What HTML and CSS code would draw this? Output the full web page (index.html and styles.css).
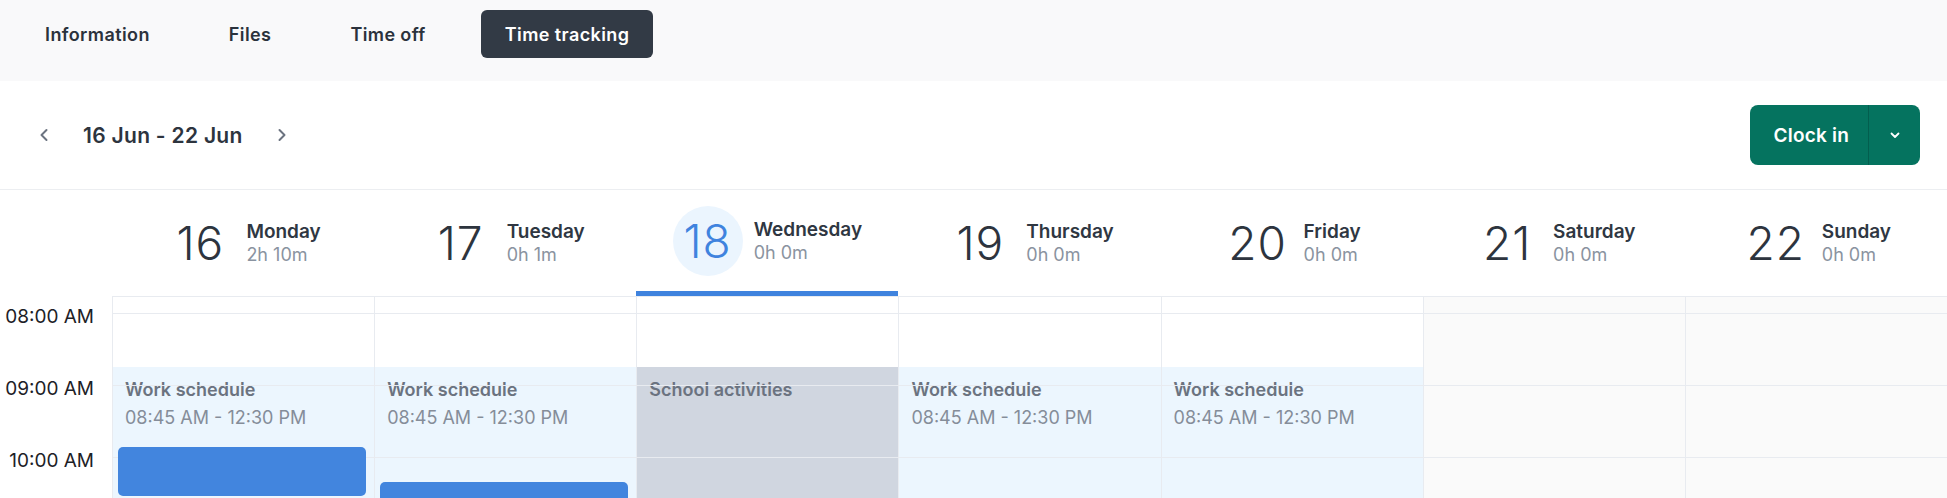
FILE: index.html
```html
<!DOCTYPE html>
<html>
<head>
    <title>Time tracking</title>
    <meta charset="UTF-8">
    <link rel="stylesheet" href="styles.css">
</head>
<body>

<div class="page">
    <div class="tabs">
        <a class="tab">Information</a>
        <a class="tab">Files</a>
        <a class="tab">Time off</a>
        <a class="tab active">Time tracking</a>
    </div>

    <div class="toolbar">
        <div class="week-nav">
            <button class="nav-btn">
                <svg width="24" height="24" viewBox="0 0 24 24"><path d="M14.5 7L9.5 12L14.5 17" /></svg>
            </button>
            <span class="week-label">16 Jun - 22 Jun</span>
            <button class="nav-btn">
                <svg width="24" height="24" viewBox="0 0 24 24"><path d="M9.5 7L14.5 12L9.5 17" /></svg>
            </button>
        </div>
        <div class="clock">
            <button class="clock-main">Clock in</button>
            <button class="clock-toggle">
                <svg width="16" height="16" viewBox="0 0 16 16"><path d="M4.5 6.5L8 10L11.5 6.5" /></svg>
            </button>
        </div>
    </div>

    <div class="cal-head">
        <div class="gutter"></div>
        <div class="day-head"><span class="day-num">16</span><div><div class="day-name">Monday</div><div class="day-total">2h 10m</div></div></div>
        <div class="day-head"><span class="day-num">17</span><div><div class="day-name">Tuesday</div><div class="day-total">0h 1m</div></div></div>
        <div class="day-head today"><span class="day-num">18</span><div><div class="day-name">Wednesday</div><div class="day-total">0h 0m</div></div></div>
        <div class="day-head"><span class="day-num">19</span><div><div class="day-name">Thursday</div><div class="day-total">0h 0m</div></div></div>
        <div class="day-head"><span class="day-num">20</span><div><div class="day-name">Friday</div><div class="day-total">0h 0m</div></div></div>
        <div class="day-head"><span class="day-num">21</span><div><div class="day-name">Saturday</div><div class="day-total">0h 0m</div></div></div>
        <div class="day-head"><span class="day-num">22</span><div><div class="day-name">Sunday</div><div class="day-total">0h 0m</div></div></div>
    </div>

    <div class="cal-body">
        <div class="gutter times">
            <div class="time">08:00 AM</div>
            <div class="time">09:00 AM</div>
            <div class="time">10:00 AM</div>
        </div>

        <div class="day-col">
            <div class="schedule">
                <div class="schedule-title">Work schedule</div>
                <div class="schedule-time">08:45 AM - 12:30 PM</div>
            </div>
            <div class="slots"><div class="slot-top"></div><div class="slot"></div><div class="slot"></div><div class="slot"></div></div>
            <div class="entry entry-mon"></div>
        </div>

        <div class="day-col">
            <div class="schedule">
                <div class="schedule-title">Work schedule</div>
                <div class="schedule-time">08:45 AM - 12:30 PM</div>
            </div>
            <div class="slots"><div class="slot-top"></div><div class="slot"></div><div class="slot"></div><div class="slot"></div></div>
            <div class="entry entry-tue"></div>
        </div>

        <div class="day-col">
            <div class="schedule absence">
                <div class="schedule-title">School activities</div>
            </div>
            <div class="slots"><div class="slot-top"></div><div class="slot"></div><div class="slot"></div><div class="slot"></div></div>
        </div>

        <div class="day-col">
            <div class="schedule">
                <div class="schedule-title">Work schedule</div>
                <div class="schedule-time">08:45 AM - 12:30 PM</div>
            </div>
            <div class="slots"><div class="slot-top"></div><div class="slot"></div><div class="slot"></div><div class="slot"></div></div>
        </div>

        <div class="day-col">
            <div class="schedule">
                <div class="schedule-title">Work schedule</div>
                <div class="schedule-time">08:45 AM - 12:30 PM</div>
            </div>
            <div class="slots"><div class="slot-top"></div><div class="slot"></div><div class="slot"></div><div class="slot"></div></div>
        </div>

        <div class="day-col weekend">
            <div class="slots"><div class="slot-top"></div><div class="slot"></div><div class="slot"></div><div class="slot"></div></div>
        </div>

        <div class="day-col weekend">
            <div class="slots"><div class="slot-top"></div><div class="slot"></div><div class="slot"></div><div class="slot"></div></div>
        </div>
    </div>
</div>

</body>
</html>
```

FILE: styles.css
```css
html,
body{
    height: 100%;
    margin: 0;
    overflow: hidden;
}

body{
    font-family: "Inter", "Liberation Sans", Arial, sans-serif;
    color: #2d343e;
    background-color: #ffffff;
}

.page{
    display: flex;
    flex-direction: column;
    height: 100%;
}

/* tabs */

.tabs{
    display: flex;
    align-items: center;
    gap: 31px;
    height: 48px;
    padding: 10px 21px 23px;
    background-color: #f9f9fa;
}

.tab{
    display: flex;
    align-items: center;
    height: 48px;
    padding: 0 24px;
    border-radius: 6px;
    font-size: 18px;
    font-weight: 600;
    letter-spacing: 0.4px;
    color: #2b323c;
    cursor: pointer;
}

.tab.active{
    background-color: #323a45;
    color: #ffffff;
}

/* week toolbar */

.toolbar{
    display: flex;
    align-items: center;
    justify-content: space-between;
    height: 108px;
    padding: 0 27px 0 32px;
    border-bottom: 1px solid #eceef1;
}

.week-nav{
    display: flex;
    align-items: center;
    gap: 27px;
}

.nav-btn{
    display: flex;
    width: 24px;
    height: 24px;
    padding: 0;
    border: none;
    background: none;
    cursor: pointer;
}

.nav-btn path{
    fill: none;
    stroke: #6b7380;
    stroke-width: 2;
    stroke-linecap: round;
    stroke-linejoin: round;
}

.week-label{
    font-size: 21px;
    font-weight: 600;
    letter-spacing: 0.3px;
    color: #2d343e;
}

.clock{
    display: flex;
    height: 60px;
    border-radius: 8px;
    background-color: #05735f;
    overflow: hidden;
}

.clock button{
    border: none;
    background: none;
    color: #ffffff;
    font-family: inherit;
    cursor: pointer;
}

.clock-main{
    padding: 0 19px 0 24px;
    font-size: 19px;
    font-weight: 600;
    letter-spacing: 0.2px;
}

.clock-toggle{
    display: flex;
    align-items: center;
    justify-content: center;
    width: 52px;
    border-left: 1px solid #035e4e !important;
}

.clock-toggle path{
    fill: none;
    stroke: #ffffff;
    stroke-width: 1.8;
    stroke-linecap: round;
    stroke-linejoin: round;
}

/* calendar */

.cal-head,
.cal-body{
    display: grid;
    grid-template-columns: 112px repeat(7, 1fr);
}

.day-head{
    display: flex;
    align-items: center;
    justify-content: center;
    gap: 11px;
    height: 106px;
    box-sizing: border-box;
}

.day-head.today{
    border-bottom: 5px solid #3f83de;
}

.day-num{
    width: 70px;
    height: 70px;
    line-height: 70px;
    text-align: center;
    font-size: 46px;
    font-weight: 300;
    letter-spacing: 1px;
    color: #2d343e;
}

.today .day-num{
    border-radius: 50%;
    background-color: #ebf5fe;
    color: #3f83de;
}

.day-name{
    font-size: 19px;
    font-weight: 600;
    line-height: 23px;
    color: #2f3742;
}

.day-total{
    font-size: 18px;
    line-height: 23px;
    color: #8a93a0;
}

.cal-body{
    flex: 1;
    overflow: hidden;
}

.times{
    padding-top: 10px;
}

.time{
    height: 72px;
    padding-right: 18px;
    line-height: 22px;
    text-align: right;
    font-size: 19px;
    color: #1d2127;
}

.day-col{
    position: relative;
    border-left: 1px solid #e8ebf0;
    border-top: 1px solid #e8ebf0;
    background-color: #ffffff;
}

.day-col.weekend{
    background-color: #fafafa;
}

.slots{
    position: relative;
    z-index: 1;
}

.slot-top{
    height: 16px;
}

.slot{
    height: 72px;
    box-sizing: border-box;
    border-top: 1px solid #e8ebf0;
}

.schedule{
    position: absolute;
    top: 70px;
    left: 0;
    right: 0;
    height: 270px;
    padding: 12px;
    background-color: #ecf6fe;
}

.schedule.absence{
    background-color: #d0d6e0;
}

.schedule-title{
    font-size: 18px;
    font-weight: 600;
    line-height: 22px;
    color: #6b7380;
}

.schedule-time{
    margin-top: 6px;
    font-size: 18px;
    line-height: 22px;
    color: #858d99;
}

.entry{
    position: absolute;
    z-index: 2;
    left: 5px;
    right: 8px;
    border-radius: 5px;
    background-color: #4285de;
}

.entry-mon{
    top: 150px;
    height: 49px;
}

.entry-tue{
    top: 185px;
    height: 200px;
}
```
